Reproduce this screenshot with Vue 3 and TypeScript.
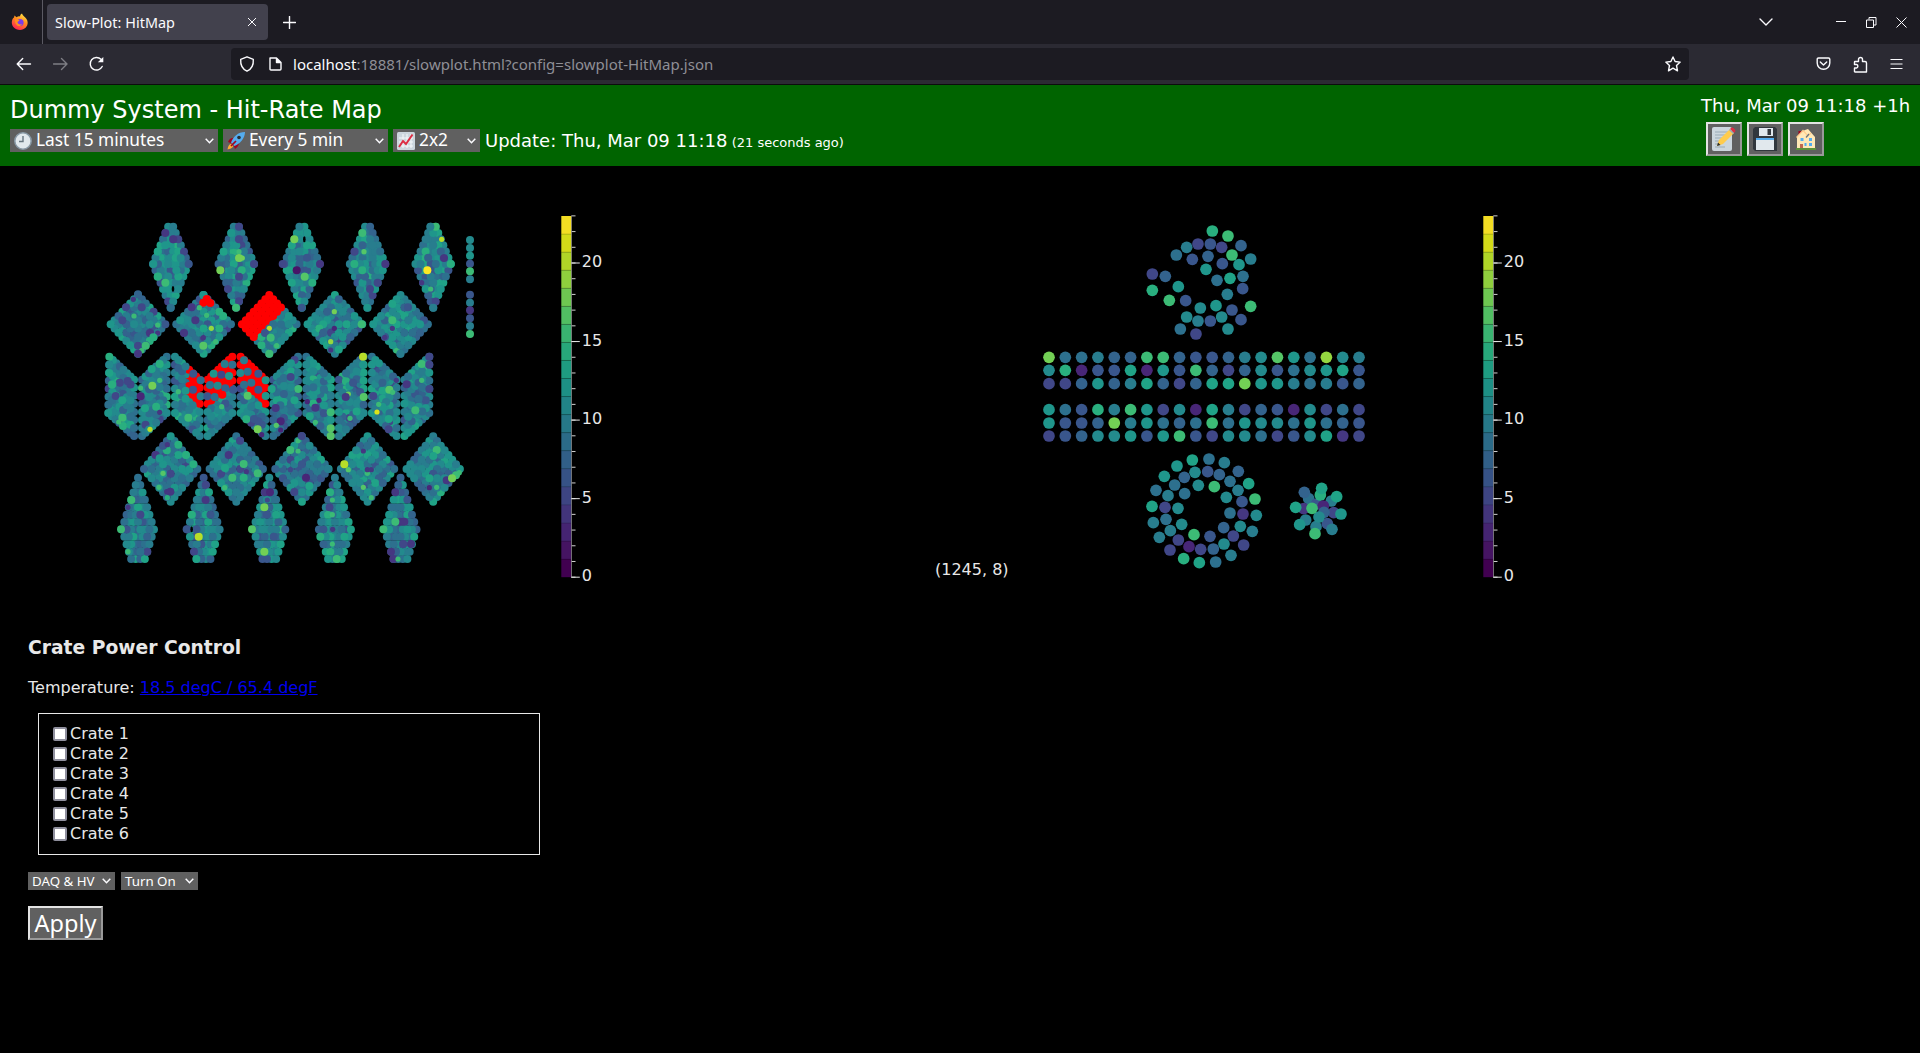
<script setup lang="ts">
interface Dot { x: number; y: number; c: string; r: number }

const RED = '#ff0000'
const viridis = [
  '#440154', '#481567', '#482677', '#453781', '#404788', '#39568c', '#33638d', '#2d708e', '#287d8e', '#238a8d',
  '#1f968b', '#20a387', '#29af7f', '#3cbb75', '#55c667', '#73d055', '#95d840', '#b8de29', '#dce319', '#fde725',
]
// Levels are written as letters: a = lowest bin, t = highest bin, R = tripped channel.
const level = (ch: string): string => (ch === 'R' ? RED : viridis[ch.charCodeAt(0) - 97])

let seed = 90311
const rnd = (): number => {
  seed = (seed * 1664525 + 1013904223) % 4294967296
  return seed / 4294967296
}
const rate = (): string => {
  const n = rnd() + rnd() + rnd() + rnd() - 2
  return viridis[Math.max(4, Math.min(12, Math.round(8.2 + n * 3)))]
}

const calo: Dot[] = []
// Panel geometry is kept in thirds of a pixel relative to the panel group origin.
const group = (oy: number, cells: Dot[]): void => {
  const order = cells.map((d) => ({ d, k: rnd() })).sort((p, q) => p.k - q.k)
  for (const { d } of order) calo.push({ x: 90 + d.x / 3, y: oy + d.y / 3, c: d.c, r: d.r })
}
const step = 196.9

const slim: Dot[] = []
for (let p = 0; p < 5; p++) {
  for (let r = 0; r < 14; r++) {
    const n = r < 7 ? r + 2 : 14 - r
    for (let i = 0; i < n; i++) slim.push({ x: 242 + p * step + (i - (n - 1) / 2) * 15.2, y: 50 + r * 18.7, c: rate(), r: 4 })
  }
}
group(210, slim)

const diamonds = (x0: number, yc: number, hw: number, hh: number, tripped: boolean): Dot[] => {
  const out: Dot[] = []
  for (let p = 0; p < 5; p++)
    for (let i = 0; i < 8; i++)
      for (let j = 0; j < 8; j++)
        out.push({
          x: x0 + p * step + ((i - j) * hw) / 7,
          y: yc - hh + ((i + j) * hh) / 7,
          c: tripped && p === 2 && i < 4 ? RED : rate(),
          r: 4,
        })
  return out
}
group(210, diamonds(144, 343, 82, 88, true))

const zig: Dot[] = []
for (let p = 0; p < 10; p++) {
  const x0 = 58 + Math.floor(p / 2) * step + (p % 2) * 98
  for (let c = 0; c < 8; c++)
    for (let r = 0; r < 8; r++) {
      const drop = p % 2 ? 7 - c : c
      const dead = r < 4 && ((p === 2 && c > 3) || p === 3 || p === 4)
      // the outer edges of the barrel widen slightly towards the bottom
      const flare = p === 0 ? -r * 0.5 * (1 - c / 7) : 0
      zig.push({ x: x0 + c * 10.6 + flare, y: 50 + drop * 9.9 + r * 24.1, c: dead ? RED : rate(), r: 4 })
    }
}
group(340, zig)
group(420, diamonds(242, 147, 80, 98, false))

const spindle: Dot[] = []
for (let p = 0; p < 5; p++)
  for (let r = 0; r < 12; r++) {
    const n = r < 8 ? r + 1 : 15 - r
    for (let i = 0; i < n; i++) spindle.push({ x: 144 + p * step + (i - (n - 1) / 2) * 13.7, y: 173 + r * 22.2, c: rate(), r: 4 })
  }
group(420, spindle)

// Channels standing out of the average, listed as x, y, level per panel group.
// A trailing * is a channel mostly hidden behind its neighbours.
const marks: [number, string][] = [
  [210, '226,69,d 250,88,d 226,106,k 203,125,l 282,125,e 272,144,j 190,162,k 296,162,f 203,200,m 226,218,n 259,181,k 265,237,j 242,293,h 447,50,e 424,69,k 447,88,e 401,125,l 447,125,n* 447,144,p 457,144,p* 391,181,p 492,162,e 455,181,m 447,200,e 414,237,e 447,274,e 438,293,n 613,88,p 652,69,k 620,181,b 690,162,d 578,162,e 644,200,o 667,218,m 635,293,f 817,69,n 822,125,o* 793,162,m 817,181,m 886,162,d 793,125,e 863,218,e 840,237,e 832,293,k 1037,50,n 1055,88,r* 1012,181,t 1062,144,d 1082,162,m 995,218,d* 1022,237,n* 1030,293,i 1021,50,i 144,253,g 130,268,d* 155,292,e 108,292,e 132,318,n* 97,331,e 203,345,n* 180,369,d 203,369,d* 144,407,e 167,407,n 155,422,n* 144,431,d 190,382,m 340,255,k 340,278,R 350,267,R 361,279,R 328,293,n* 305,292,d 350,316,n* 316,331,d 364,355,q* 340,383,d* 282,369,d 340,407,o 377,395,n* 538,355,r* 525,369,f 542,383,n 560,407,n* 538,431,n 733,305,p* 815,343,n 733,355,c* 722,395,q* 722,420,d* 907,331,n 907,282,l 954,292,f 907,355,d* 884,382,d* 919,422,n* 931,431,i'],
  [340, '113,123,e 187,137,p 209,121,n* 152,144,n* 152,169,c 209,72,m 185,87,l 97,233,n 86,246,n* 180,268,r* 66,134,m 77,168,e 97,181,l 58,99,l 58,74,j 165,205,l 209,217,d* 310,101,f 332,121,h 309,149,f 332,169,i 404,72,i 427,74,h 371,101,k 394,104,e 417,108,k 360,135,h 383,137,j 406,145,g 430,149,f 352,169,f 374,171,h 397,164,R 462,61,i 451,99,j 473,95,h 505,101,f 462,134,h 484,128,h 505,149,f 473,167,o 527,121,k 527,168,k 295,233,n 265,155,n* 395,200,n* 469,238,m 503,268,p 515,284,c* 492,237,f 557,204,d 572,244,c 572,270,c* 559,256,o* 545,147,l 625,147,n 602,111,e 676,203,d 652,185,c* 687,181,c* 722,217,n 722,265,o 722,288,o 676,247,n* 775,162,p* 767,171,d 819,50,r 819,74,k 821,171,o 780,235,n* 861,216,s* 866,193,n* 898,149,o 908,157,n* 896,268,e 896,237,l 919,121,d* 850,168,e 995,72,n 995,121,n* 950,133,d 976,211,n 1018,50,e 1018,74,e 1018,147,e'],
  [420, '197,105,d 209,115,k 265,74,m 288,105,m 310,133,m 232,74,d* 219,160,o* 207,202,n* 230,215,d* 241,215,d 232,233,m* 416,105,d 450,62,e 461,132,n 427,173,n 469,155,d* 503,160,n 404,203,n* 405,144,l 461,173,m 624,62,n* 601,90,n 624,93,n* 635,48,e 601,149,e* 648,173,c 613,216,e 658,198,l 714,147,i 775,149,o* 763,133,r 820,93,d* 832,160,n* 832,149,d* 844,149,d* 820,202,o* 844,233,n* 1040,90,n 1030,108,l 1070,181,d 1108,158,n* 1098,166,n 1086,175,p 1018,203,c* 1040,202,n* 124,240,n 114,262,d* 151,284,e 93,328,n 114,395,n* 172,395,e 151,395,h 347,195,e 357,217,l 347,240,d 305,284,m 326,350,r 290,328,f 319,328,f 312,395,e 319,417,l 525,217,d 540,217,c 523,262,p 532,240,e* 486,328,o 551,350,f 523,395,p 720,217,m 727,240,n* 719,262,e 727,284,n* 728,328,d* 691,350,m 727,372,n* 740,417,n 763,350,l 916,217,d 930,305,d 943,305,d 916,305,n 880,328,n 963,372,d 940,372,e 903,395,d 910,417,d 924,417,n*'],
]
for (const [oy, text] of marks)
  for (const item of text.split(' ')) {
    const [x, y, ch] = item.split(',')
    calo.push({ x: 90 + Number(x) / 3, y: oy + Number(y) / 3, c: level(ch[0]), r: ch.length > 1 ? 2.6 : 4 })
  }
;[90, 114, 137, 161, 184, 208, 254, 278, 301, 325, 348, 372].forEach((y, i) =>
  calo.push({ x: 470, y: 210 + y / 3, c: level('jjkfnifidfin'[i]), r: 4 }),
)
// unread channels
const holes: { x: number; y: number }[] = [
  { x: 90 + 249 / 3, y: 210 + 237 / 3 },
  { x: 90 + 643 / 3, y: 210 + 88 / 3 },
  { x: 90 + 305 / 3, y: 420 + 328 / 3 },
]

const tracker: Dot[] = []
const strips = [
  'phhiggnngffgijokhqji', 'jmcfflckfngegjfhjklf', 'eegkgilgegllpkkihifg',
  'khfminkejcliegfcjehe', 'kffgpikhghnhkjjhkhgf', 'efgjjkfknfejjhefjlde',
]
const stripY = [442, 481, 521, 599, 639, 678]
strips.forEach((s, r) => {
  for (let i = 0; i < 20; i++) tracker.push({ x: 1030 + (57 + i * 48.95) / 3, y: 210 + stripY[r] / 3, c: level(s[i]), r: 5.85 })
})
const scatter = (ox: number, oy: number, text: string): void => {
  for (const item of text.split(' ')) {
    const [x, y, ch] = item.split(',')
    tracker.push({ x: ox + Number(x) / 3, y: oy + Number(y) / 3, c: level(ch), r: 5.85 })
  }
}
scatter(1030, 210, '547,63,m 594,78,n 504,102,e 541,102,f 575,112,e 633,107,g 470,112,i 439,135,h 487,148,f 534,139,g 606,135,n 662,147,i 577,161,f 627,164,k 528,178,k 367,192,e 406,199,g 561,211,h 600,205,l 639,199,h 367,241,m 445,230,k 638,236,f 592,253,i 418,271,n 467,272,f 511,294,j 558,287,k 606,300,f 662,289,n 470,321,j 504,333,i 541,333,f 575,321,j 633,329,f 451,357,h 594,357,j 498,372,e')
scatter(920, 400, '817,180,l 867,177,h 913,188,i 771,198,k 955,214,g 825,217,j 863,215,f 898,224,g 733,229,k 793,232,g 930,244,h 986,251,l 764,255,h 835,256,j 883,260,n 708,271,h 954,271,i 744,287,i 794,281,h 919,292,j 1005,297,n 966,305,f 696,319,l 735,322,e 774,325,j 930,339,h 969,342,d 1009,346,j 738,358,h 700,368,i 785,373,j 961,379,j 911,383,g 751,392,i 997,394,i 718,412,i 822,404,n 870,409,f 940,408,e 775,420,e 971,435,e 750,450,e 807,440,c 912,432,j 842,448,e 880,447,g 933,466,i 791,476,m 838,488,l 887,486,h')
scatter(920, 400, '1166,296,h 1190,312,f 1234,303,i 1201,285,m 1151,326,d 1241,338,e 1157,360,i 1188,380,i 1222,371,f 1210,318,c 1212,337,g 1197,351,j 1205,265,l 1250,290,l 1153,277,g 1127,322,l 1176,325,n 1263,342,k 1139,374,k 1236,388,i 1185,401,n')

const bars = [{ x: 561.3 }, { x: 1483.3 }]
const minor = Array.from({ length: 24 }, (_, i) => i)
const major = [0, 5, 10, 15, 20]
const tickY = (v: number): number => 577.2 - v * 15.71
const crates = [1, 2, 3, 4, 5, 6]
</script>

<template>
  <div class="window">
    <div class="tabs">
      <div class="pinned">
        <svg width="18" height="18" viewBox="0 0 18 18">
          <defs>
            <linearGradient id="fx" x1=".8" y1="0" x2=".3" y2="1"><stop offset="0" stop-color="#fff04a" /><stop offset=".45" stop-color="#ff8a1e" /><stop offset="1" stop-color="#ff1f55" /></linearGradient>
          </defs>
          <path d="M3 4.500 3.500 2.500 5.500 4.200C7 3.200 8 3.200 9 3.400 9.100 2 10 .800 11 .500 11.500 3 14 3.800 15.500 6 18.500 10.500 15.500 17 9 17 3 17 0 12 1 8 1.300 6 2 5 3 4.500Z" fill="url(#fx)" />
          <circle cx="9" cy="9.500" r="3.600" fill="#7a3bea" />
          <path d="M4 6.500C6 5.500 7.500 6.500 8.500 7.500L6.500 9C6.500 11 9 12 11 11 9 15 3.500 13 4 6.500Z" fill="#ff8f20" />
        </svg>
      </div>
      <div class="tab"><span class="tab-title">Slow-Plot: HitMap</span>
        <svg width="10" height="10" viewBox="0 0 10 10"><path d="M1 1 9 9M9 1 1 9" class="ln" /></svg>
      </div>
      <svg class="plus" width="13" height="13" viewBox="0 0 13 13"><path d="M6.500 .500V12.500M.500 6.500H12.500" class="ln b" /></svg>
      <div class="winctl">
        <svg width="14" height="8" viewBox="0 0 14 8"><path d="M1 1 7 7 13 1" class="ln b" /></svg>
        <svg class="mn" width="10" height="12" viewBox="0 0 10 12"><path d="M0 5.500H10" class="ln" /></svg>
        <svg class="rs" width="11" height="11" viewBox="0 0 11 11"><path d="M.500 3H7.500V10.500H.500ZM3 2.500V.500H10V8H8" class="ln" /></svg>
        <svg class="cl" width="11" height="11" viewBox="0 0 11 11"><path d="M.500 .500 10.500 10.500M10.500 .500 .500 10.500" class="ln" /></svg>
      </div>
    </div>

    <div class="toolbar">
      <div class="nav">
        <svg width="16" height="14" viewBox="0 0 16 14"><path d="M14.500 7H1.200M6.700 1.500 1.200 7 6.700 12.500" class="ln b" /></svg>
        <svg class="dim" width="16" height="14" viewBox="0 0 16 14"><path d="M.500 7H14M8.500 1.500 14 7 8.500 12.500" class="ln b" /></svg>
        <svg width="16" height="16" viewBox="0 0 16 16"><path d="M13.200 10.500A6.300 6.300 0 1 1 12 3.300" class="ln b" /><path d="M14.300 1V6.300H8.800Z" fill="#fbfbfe" /></svg>
      </div>
      <div class="url">
        <svg width="16" height="16" viewBox="0 0 16 16"><path d="M8 .800 14.300 3.300C14.700 9 12.500 13.200 8 15.200 3.500 13.200 1.300 9 1.700 3.300Z" class="ln b" /></svg>
        <svg class="doc" width="13" height="14" viewBox="0 0 13 14"><path d="M1 1H7.500L12 5.500V12Q12 13 11 13H2Q1 13 1 12ZM7.500 1V5.500H12Z" class="ln b" /><path d="M7.500 1 12 5.500H7.500Z" fill="#fbfbfe" /></svg>
        <span class="addr"><b>localhost</b>:18881/slowplot.html?config=slowplot-HitMap.json</span>
        <svg class="star" width="16" height="16" viewBox="0 0 16 16"><path d="M8 1 10.100 5.500 15.200 6.100 11.500 9.500 12.500 14.800 8 12.200 3.500 14.800 4.500 9.500 .800 6.100 5.900 5.500Z" class="ln b" /></svg>
      </div>
      <div class="tools">
        <svg width="15" height="14" viewBox="0 0 15 14"><path d="M2.500 1H12.500Q13.800 1 13.800 2.300V6A6.300 6.300 0 0 1 1.200 6V2.300Q1.200 1 2.500 1ZM4.300 5 7.500 8 10.700 5" class="ln b" /></svg>
        <svg width="15" height="17" viewBox="0 0 15 17"><path d="M2 5.500H5.500V3.500A2 2 0 0 1 9.500 3.500V5.500H12Q13.500 5.500 13.500 7V16H2Q1.500 16 1.500 15.500V12H3.500A1.800 1.800 0 0 0 3.500 8.500H1.500V6Q1.500 5.500 2 5.500Z" class="ln b" /></svg>
        <svg width="13" height="12" viewBox="0 0 13 12"><path d="M.500 1.500H12.500M.500 6H12.500M.500 10.500H12.500" class="ln" /></svg>
      </div>
    </div>

    <header class="banner">
      <div class="left">
        <div class="title">Dummy System - Hit-Rate Map</div>
        <div class="controls">
          <div class="sel s1">
            <svg width="18" height="18" viewBox="0 0 18 18"><circle cx="9" cy="9" r="8.200" fill="#e1e8ed" stroke="#8899a6" stroke-width="1.500" /><path d="M9 4V9.500H5" fill="none" stroke="#66757f" stroke-width="1.400" /></svg>
            <span>Last 15 minutes</span><svg class="chev" width="9" height="6" viewBox="0 0 9 6"><path d="M.700 .800 4.500 4.700 8.300 .800" class="ln c" /></svg>
          </div>
          <div class="sel s2">
            <svg width="18" height="18" viewBox="0 0 18 18"><path d="M.500 17.500C1 13 3 11 6 11.500 7 15 5 16.500 .500 17.500Z" fill="#ffac33" /><path d="M1 10Q3 5 9 6L6 12ZM8 17Q13 14 12 8L6 12Z" fill="#a0041e" /><path d="M18 0C18 6 13 12 7.500 14L4 10.500C6 5 11 0 18 0Z" fill="#55acee" /><circle cx="12" cy="5.500" r="1.800" fill="#292f33" /><path d="M4 14 9 9" stroke="#a0041e" stroke-width="1.700" /></svg>
            <span>Every 5 min</span><svg class="chev" width="9" height="6" viewBox="0 0 9 6"><path d="M.700 .800 4.500 4.700 8.300 .800" class="ln c" /></svg>
          </div>
          <div class="sel s3">
            <svg width="18" height="18" viewBox="0 0 18 18"><rect width="18" height="18" rx="1.500" fill="#ccd6dd" /><path d="M2 6H16M2 10H16M2 14H16M6 2V16M10 2V16M14 2V16" stroke="#f5f8fa" /><path d="M2 15 6 9 9 12 15.500 2.500" fill="none" stroke="#dd2e44" stroke-width="2" /></svg>
            <span>2x2</span><svg class="chev" width="9" height="6" viewBox="0 0 9 6"><path d="M.700 .800 4.500 4.700 8.300 .800" class="ln c" /></svg>
          </div>
          <div class="update">Update: Thu, Mar 09 11:18 <small>(21 seconds ago)</small></div>
        </div>
      </div>
      <div class="right">
        <div class="clock">Thu, Mar 09 11:18 +1h</div>
        <div class="btns">
          <button>
            <svg width="24" height="24" viewBox="0 0 24 24"><rect width="20" height="24" rx="2" fill="#ccd6dd" /><path d="M3 5H16M3 8H15M3 11H12M3 14H9M3 17H7M3 20H13" stroke="#99aab5" /><path d="M5 19 7 13 18 2 22 6 11 17Z" fill="#ffcc4d" /><path d="M18 2 19.500 .500Q22 0 23.500 4L22 6Z" fill="#dd2e44" /><path d="M17 3 18 2 22 6 21 7Z" fill="#99aab5" /><path d="M5 19 6 15.500 8.500 18Z" fill="#292f33" /></svg>
          </button>
          <button>
            <svg width="24" height="24" viewBox="0 0 24 24"><path d="M2 0H22L24 2V24H2L0 22V2Z" fill="#31373d" /><rect x="6" y="1" width="14" height="8" fill="#e1e8ed" /><rect x="14.500" y="2" width="3.500" height="6" fill="#31373d" /><rect x="3" y="11" width="18" height="12" fill="#e1e8ed" /><rect x="3" y="11" width="18" height="2" fill="#55acee" /></svg>
          </button>
          <button>
            <svg class="house" width="20" height="21" viewBox="0 0 20 21"><rect x="2.500" y="2" width="3" height="6" fill="#a0041e" /><path d="M1 19V8L7 2 9 1 12 0 19 8V19Z" fill="#ffe8b6" /><path d="M.500 8.500 7 1.500 12 7 15 4" fill="none" stroke="#ffcc8d" stroke-width="1.200" /><path d="M10 8.500 13 5" stroke="#66757f" stroke-width="1.200" /><path d="M4.500 9H7.500V12H4.500ZM13 9H16V12H13ZM13 14H16V17H13ZM8.500 14H10.500V17H8.500Z" fill="#55acee" /><path d="M4 15H7V19H4Z" fill="#c1694f" /><rect y="19" width="20" height="2" fill="#5c913b" /></svg>
          </button>
        </div>
      </div>
    </header>

    <section class="plots">
      <svg v-for="(b, n) in bars" :key="n" width="922" height="454" :viewBox="n === 0 ? '0 166 922 454' : '922 166 922 454'">
        <template v-if="n === 0">
          <circle v-for="(d, i) in calo" :key="i" :cx="d.x" :cy="d.y" :r="d.r" :fill="d.c" />
          <ellipse v-for="(h, i) in holes" :key="'h' + i" :cx="h.x" :cy="h.y" rx="1.300" ry="3" fill="#000" />
        </template>
        <template v-else>
          <circle v-for="(d, i) in tracker" :key="i" :cx="d.x" :cy="d.y" :r="d.r" :fill="d.c" />
          <text x="935" y="575">(1245, 8)</text>
        </template>
        <g opacity=".96">
          <rect v-for="(c, i) in viridis" :key="'c' + i" :x="b.x" :y="577.2 - (i + 1) * 18.06" width="10.200" height="18.060" :fill="c" />
          <path v-for="i in 19" :key="'s' + i" :d="`M${b.x} ${577.2 - i * 18.06}h10`" stroke="#000" stroke-opacity=".15" />
        </g>
        <path v-for="v in minor" :key="'m' + v" :d="`M${b.x + 10} ${tickY(v)}h4.200`" stroke="#d0d0d0" />
        <path :d="`M${b.x + 10.200} 216V577.500`" stroke="#888" stroke-width=".8" />
        <template v-for="v in major" :key="'M' + v">
          <path :d="`M${b.x + 10} ${tickY(v)}h8.500`" stroke="#e8e8e8" />
          <text :x="b.x + 20.5" :y="tickY(v) + 4">{{ v }}</text>
        </template>
      </svg>
    </section>

    <section class="crate">
      <h3>Crate Power Control</h3>
      <p>Temperature: <a href="#">18.5 degC / 65.4 degF</a></p>
      <div class="box">
        <label v-for="n in crates" :key="n"><input type="checkbox">Crate {{ n }}</label>
      </div>
      <div class="row">
        <div class="sel small d1"><span>DAQ &amp; HV</span><svg class="chev" width="9" height="6" viewBox="0 0 9 6"><path d="M.700 .800 4.500 4.700 8.300 .800" class="ln c" /></svg></div>
        <div class="sel small d2"><span>Turn On</span><svg class="chev" width="9" height="6" viewBox="0 0 9 6"><path d="M.700 .800 4.500 4.700 8.300 .800" class="ln c" /></svg></div>
      </div>
      <button class="apply">Apply</button>
    </section>
  </div>
</template>

<style>
html, body { margin: 0; background: #000; overflow: hidden; }
</style>

<style scoped>
.window { width: 1920px; height: 1053px; overflow: hidden; background: #000; color: #e8e8e8; font-family: "DejaVu Sans", sans-serif; font-size: 16px; display: flex; flex-direction: column; }
svg { flex: none; display: block; }
.ln { fill: none; stroke: #fbfbfe; stroke-width: 1; }
.ln.b { stroke-width: 1.4; stroke-linejoin: round; stroke-linecap: round; }
.ln.c { stroke-width: 1.5; }
.tabs { height: 44px; background: #1c1b22; display: flex; align-items: center; font-family: "Noto Sans", sans-serif; }
.pinned { height: 44px; border-right: 1px solid #5b5a63; display: flex; align-items: center; box-sizing: border-box; width: 43px; padding-left: 11px; }
.tab { margin-left: 4px; width: 221px; height: 36px; border-radius: 4px; background: #42414d; box-sizing: border-box; padding: 0 11px 0 8px; display: flex; align-items: center; justify-content: space-between; color: #fbfbfe; }
.tab-title { font-size: 14.4px; letter-spacing: .03px; white-space: nowrap; }
.plus { margin-left: 15px; }
.winctl { margin-left: auto; display: flex; align-items: center; padding-right: 13px; }
.mn { margin-left: 63px; }
.rs { margin-left: 20px; }
.cl { margin-left: 19px; }
.toolbar { height: 41px; background: #2b2a33; border-bottom: 1px solid #0c0c0d; box-sizing: border-box; display: flex; align-items: center; font-family: "Noto Sans", sans-serif; }
.nav { width: 231px; box-sizing: border-box; padding-left: 16px; display: flex; align-items: center; gap: 20.500px; }
.dim { opacity: .4; }
.url { width: 1458px; height: 32px; border-radius: 4px; background: #1c1b22; display: flex; align-items: center; box-sizing: border-box; padding: 0 8px; }
.doc { margin-left: 13.5px; }
.addr { margin-left: 11.5px; font-size: 15px; letter-spacing: .01px; color: #8f8f96; white-space: nowrap; }
.addr b { font-weight: 400; color: #fbfbfe; }
.star { margin-left: auto; }
.tools { display: flex; align-items: center; margin-left: auto; gap: 22px; padding-right: 17.500px; }
.banner { height: 81px; flex: none; background: #006400; color: #fff; display: flex; justify-content: space-between; box-sizing: border-box; padding: 0 10px; }
.title { font-size: 24px; line-height: 28px; padding-top: 11px; white-space: nowrap; }
.controls { display: flex; align-items: center; margin-top: 5px; height: 23px; }
.sel { background: #606060; color: #fff; height: 23px; display: flex; align-items: center; box-sizing: border-box; padding: 0 4px; margin-right: 5px; font-family: "Noto Sans", sans-serif; font-size: 17.3px; white-space: nowrap; }
.sel span { margin-left: 4px; line-height: 20px; padding-bottom: 1px; }
.chev { margin-left: auto; }
.s1 { width: 208px; }
.s2 { width: 165px; }
.s3 { width: 87px; }
.update { font-size: 18px; white-space: nowrap; }
.update small { font-size: 13px; margin-left: -1.500px; }
.right { display: flex; flex-direction: column; width: 209px; }
.clock { font-size: 18px; line-height: 22px; padding-top: 10px; white-space: nowrap; text-align: right; }
.btns { display: flex; gap: 5px; margin: 5px 0 0 5px; }
button { background: #606060; border: 2px solid; border-color: #e3e3e3 #999 #999 #e3e3e3; padding: 0; color: #fff; }
.btns button { width: 36px; height: 34px; display: flex; align-items: center; justify-content: center; }
.house { margin-top: 1px; }
.plots { display: flex; height: 454px; flex: none; }
.plots text { fill: #e8e8e8; font-size: 16px; font-family: "DejaVu Sans", sans-serif; }
.crate { padding: 0 28px; }
h3 { margin: 16px 0 0; font-size: 18.72px; line-height: 24px; }
p { margin: 18px 0 0; line-height: 20px; }
a { color: #00e; }
.box { margin: 15px 0 0 10px; width: 502px; height: 142px; border: 1px solid #e8e8e8; box-sizing: border-box; padding: 9px 14px; }
label { display: flex; align-items: center; height: 20px; }
input { appearance: none; width: 14px; height: 14px; margin: 1px 3px 0 0; border: 2px solid #8f8f9d; border-radius: 2px; background: #fff; }
.row { display: flex; margin-top: 17px; }
.small { height: 18px; font-size: 13.3px; margin-right: 6px; }
.small span { margin-left: 0; padding-bottom: 0; }
.d1 { width: 87px; }
.d2 { width: 77px; }
.apply { display: block; margin-top: 16px; width: 75px; height: 34px; font: 23.500px/28px "Noto Sans", sans-serif; white-space: nowrap; }
</style>
